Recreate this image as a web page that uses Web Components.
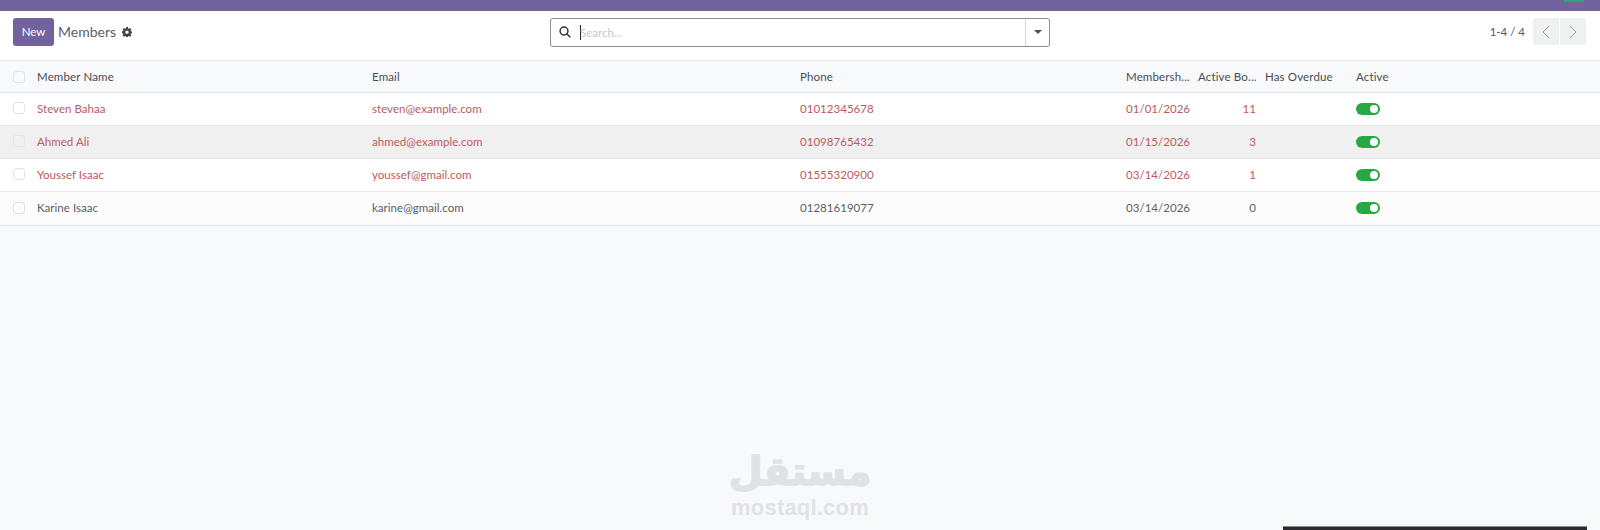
<!DOCTYPE html>
<html><head><meta charset="utf-8"><title>Members</title>
<style>
html,body{margin:0;padding:0;height:100%;overflow:hidden}
body{background:#f8f9fb;font-family:Lato,"Noto Sans",sans-serif;font-size:11.5px;color:#3c4047}
</style></head><body>
<members-app></members-app>
<script>
class Base extends HTMLElement{
  constructor(){super();this.attachShadow({mode:'open'}).innerHTML=this.constructor.html;}
}
const GEAR='<svg width="10" height="10" viewBox="0 0 16 16"><path fill="#3f444b" fill-rule="evenodd" d="M6.600 0h2.800l.4 2.200 1.400.6L13 1.500l2 2-1.300 1.800.6 1.400 2.200.4v2.800l-2.200.4-.6 1.400 1.300 1.800-2 2-1.800-1.300-1.400.6-.4 2.200H6.600l-.4-2.200-1.400-.6L3 15.500l-2-2 1.300-1.800-.6-1.400L-.5 9.900V6.900l2.200-.4.6-1.400L1 3.500l2-2 1.800 1.300 1.400-.6zM8 5.500a2.700 2.700 0 1 0 0 5.400 2.700 2.700 0 0 0 0-5.400z"/></svg>';
class TopBar extends Base{static html=`<style>:host{display:block;height:11px;background:#71639e;position:relative}
i{position:absolute;left:1564px;top:0;width:20px;height:2px;background:#2aa77c}</style><i></i>`}
class ControlPanel extends Base{static html=`<style>
:host{display:grid;grid-template-columns:537px 500px 1fr;align-items:start;height:49px;background:#fff;padding:6.500px 14px 0 13px;box-sizing:border-box}
.l{display:flex;align-items:center;height:28px}
button{font:inherit;font-size:11.5px;width:41px;height:28px;border:0;border-radius:3px;background:#71639e;color:#fff;padding:0;margin-right:4px}
.t{font-size:14px;color:#5a5f66;margin-right:6px}
.l svg{display:block}
.s{height:29px;border:1px solid #8c8a96;border-radius:3px;display:flex;align-items:center;box-sizing:border-box;background:#fff}
.s svg{margin-left:8px;flex:none}
.in{flex:1;margin-left:9px;display:flex;align-items:center;color:#c4c8cd;font-size:11.5px;height:100%}
.cur{width:1px;height:15px;background:#222;margin-right:-1px}
.dd{width:23px;height:100%;border-left:1px solid #d8dadd;display:flex;align-items:center;justify-content:center}
.dd i{border:4px solid transparent;border-top-color:#495057;border-bottom:0}
.r{display:flex;justify-content:flex-end;align-items:center;height:28px}
.p{font-size:11.5px;color:#55595f;margin-right:8px}
.b{width:26px;height:27px;background:#eff0f2;display:flex;align-items:center;justify-content:center}
.b+.b{margin-left:1px;border-radius:0 3px 3px 0}.b.f{border-radius:3px 0 0 3px}
</style>
<div class="l"><button>New</button><span class="t">Members</span>${GEAR}</div>
<div class="s"><svg width="12" height="12" viewBox="0 0 12 12" fill="none" stroke="#30343a" stroke-width="1.500"><circle cx="5" cy="5" r="3.900"/><path d="M7.800 7.800L11.300 11.300"/></svg>
<div class="in"><span class="cur"></span><span>Search...</span></div><div class="dd"><i></i></div></div>
<div class="r"><span class="p">1-4 / 4</span>
<div class="b f"><svg width="8" height="14" viewBox="0 0 8 14" fill="none" stroke="#9a9da3" stroke-width="1"><path d="M7 1L1 7l6 6"/></svg></div>
<div class="b"><svg width="8" height="14" viewBox="0 0 8 14" fill="none" stroke="#9a9da3" stroke-width="1"><path d="M1 1l6 6-6 6"/></svg></div></div>`}
const GRID='grid-template-columns:37px 335px 428px 326px 72px 67px 91px 1fr';
class ListHead extends Base{static html=`<style>
:host{display:grid;${GRID};align-items:center;height:33px;box-sizing:border-box;background:#f8f9fb;border-top:1px solid #e3e6ea;border-bottom:1px solid #e3e6ea;color:#484c53;font-size:11.5px;letter-spacing:.15px}
.c{width:12px;height:12px;border:1px solid #e1e3e6;border-radius:3px;margin-left:13px;box-sizing:border-box;background:#f8f9fb}
span{white-space:nowrap}
</style><div class="c"></div><span>Member Name</span><span>Email</span><span>Phone</span><span>Membersh...</span><span>Active Bo...</span><span>Has Overdue</span><span>Active</span>`}
class ListRow extends Base{static html=`<style>
:host{display:grid;${GRID};align-items:center;height:33px;padding-bottom:2px;box-sizing:border-box;background:#fff;border-bottom:1px solid #e3e6ea;color:#bc5a60;font-size:11.5px;letter-spacing:.03px}
:host([normal]){color:#5a5e65;background:#fcfcfc;height:34px;padding-bottom:2px}
:host([hover]){background:#f0f0f0}
.c{width:12px;height:12px;border:1px solid #e1e3e6;border-radius:3px;margin-left:13px;box-sizing:border-box}
.n{text-align:right;padding-right:9px}
.t{width:24px;height:12px;border-radius:6px;background:#28a745;position:relative;top:.5px}
.t::after{content:"";position:absolute;right:2px;top:2px;width:8px;height:8px;border-radius:50%;background:#fff}
</style><div class="c"></div><span><slot name="name"></slot></span><span><slot name="email"></slot></span><span><slot name="phone"></slot></span><span><slot name="date"></slot></span><span class="n"><slot name="count"></slot></span><span></span><div class="t"></div>`}
class Watermark extends Base{static html=`<style>
:host{position:absolute;left:700px;top:452px;width:200px;text-align:center;color:#e0e2e6;pointer-events:none}
.a{font:700 39px/40px "DejaVu Sans",sans-serif;display:block;height:40px;-webkit-text-stroke:1.500px #e0e2e6}
.e{font:700 22px/22px "Liberation Sans",sans-serif;display:block;margin-top:5px;letter-spacing:.2px}
</style><span class="a" lang="ar" dir="rtl">مستقل</span><span class="e">mostaql.com</span>`}
class MembersApp extends Base{static html=`<style>
:host{display:block;position:relative;width:1600px;height:530px;overflow:hidden}
.bar{position:absolute;left:1283px;top:526px;width:304px;height:4px;background:#2b2b2d;border-top:1px solid #8a8a8c;box-sizing:border-box}
</style>
<top-bar></top-bar><control-panel></control-panel><list-head></list-head>
<list-row><span slot="name">Steven Bahaa</span><span slot="email">steven@example.com</span><span slot="phone">01012345678</span><span slot="date">01/01/2026</span><span slot="count">11</span></list-row>
<list-row hover><span slot="name">Ahmed Ali</span><span slot="email">ahmed@example.com</span><span slot="phone">01098765432</span><span slot="date">01/15/2026</span><span slot="count">3</span></list-row>
<list-row><span slot="name">Youssef Isaac</span><span slot="email">youssef@gmail.com</span><span slot="phone">01555320900</span><span slot="date">03/14/2026</span><span slot="count">1</span></list-row>
<list-row normal><span slot="name">Karine Isaac</span><span slot="email">karine@gmail.com</span><span slot="phone">01281619077</span><span slot="date">03/14/2026</span><span slot="count">0</span></list-row>
<water-mark></water-mark><div class="bar"></div>`}
customElements.define('top-bar',TopBar);
customElements.define('control-panel',ControlPanel);
customElements.define('list-head',ListHead);
customElements.define('list-row',ListRow);
customElements.define('water-mark',Watermark);
customElements.define('members-app',MembersApp);
</script>
</body></html>
